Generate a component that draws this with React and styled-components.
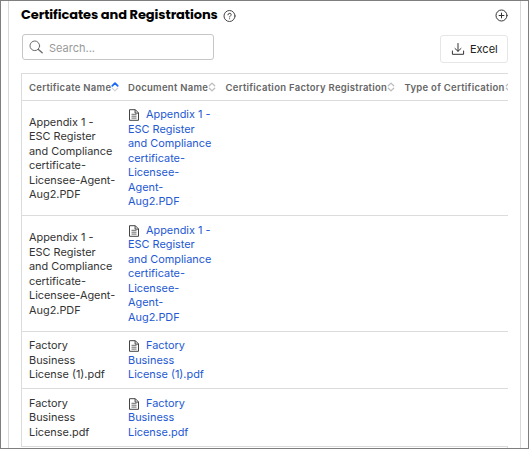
import React from "react";
import styled, { createGlobalStyle } from "styled-components";

const Global = createGlobalStyle`
  * { box-sizing: border-box; }
  html, body { margin: 0; height: 100%; overflow: hidden; background: #fff; }
  body { font-family: Inter, "Liberation Sans", sans-serif; }
`;

const Frame = styled.div`
  width: 529px;
  height: 449px;
  border: 1px solid #7f7f7f;
  padding: 0 7px;
  overflow: hidden;
`;

const Panel = styled.section`
  height: 100%;
  border: solid #d9d9d9;
  border-width: 0 1px;
  padding: 0 12px;
`;

const TitleBar = styled.header`
  height: 33px;
  display: flex;
  align-items: center;
  padding: 0 0 5px 0;
`;

const Title = styled.h1`
  margin: 0 5px 0 0;
  font: 700 13px/18px Poppins, Inter, sans-serif;
  letter-spacing: -0.1px;
  color: #000;
  white-space: nowrap;
`;

const Spacer = styled.div`
  flex: 1;
`;

const Toolbar = styled.div`
  height: 39px;
  display: flex;
  justify-content: space-between;
  align-items: flex-start;
`;

const Search = styled.label`
  width: 192px;
  height: 26px;
  margin-left: 1px;
  padding-left: 6px;
  display: flex;
  align-items: center;
  gap: 6px;
  border: 1px solid #c6c6c6;
  border-radius: 3px;
  color: #6b6b6b;
`;

const SearchInput = styled.input`
  width: 150px;
  border: 0;
  padding: 1px 0 0;
  outline: 0;
  background: none;
  font: 400 11px/16px Inter, sans-serif;
  letter-spacing: 0;
  &::placeholder { color: #999; opacity: 1; }
`;

const ExportButton = styled.button`
  width: 68px;
  height: 28px;
  margin-top: 1px;
  padding: 0 0 0 10px;
  display: flex;
  align-items: center;
  gap: 5px;
  background: #fff;
  border: 1px solid #e6e6e6;
  border-radius: 3px;
  color: #222;
  font: 400 11px/16px Inter, sans-serif;
`;

const TableClip = styled.div`
  overflow: hidden;
  height: 376px;
`;

const Grid = styled.div`
  width: 620px;
  border: solid #dcdcdc;
  border-width: 1px 0 0 1px;
`;

const Row = styled.div`
  display: grid;
  grid-template-columns: 99px 97.5px 179px 1fr;
  align-items: center;
  height: ${(p) => p.$height}px;
  padding-left: 7px;
  border-bottom: 1px solid #dcdcdc;
`;

const HeadCell = styled.div`
  display: flex;
  align-items: center;
  white-space: nowrap;
  color: #666;
  font-size: 9.5px;
  font-weight: 600;
  letter-spacing: 0.28px;
`;

const Cell = styled.div`
  width: ${(p) => p.$width}px;
  color: #333;
  font-size: 10.9px;
  line-height: 14.5px;
`;

const FileLink = styled.a`
  color: #2459d3;
`;

const DocIcon = styled.svg`
  width: 12px;
  height: 12px;
  margin-right: 6px;
  vertical-align: -3px;
  color: #444;
`;

const Stub = styled.div`
  width: 487px;
  height: 20px;
  border-right: 1px solid #dcdcdc;
`;

const Line = styled.svg`
  flex: none;
  fill: none;
  stroke: currentColor;
  stroke-linecap: round;
  stroke-linejoin: round;
`;

const Sort = ({ up }) => (
  <Line width="8" height="10" viewBox="0 0 8 10" strokeWidth="1.3">
    <path d="M1.3 3.8 4 1.1 6.7 3.8" stroke={up ? "#1769f5" : "#bdbdbd"} strokeWidth={up ? 1.8 : 1.3} />
    <path d="M1.3 6.2 4 8.9 6.7 6.2" stroke={up ? "#d6d6d6" : "#bdbdbd"} />
  </Line>
);

const Help = () => (
  <Line width="13" height="13" viewBox="0 0 13 13" color="#444">
    <circle cx="6.5" cy="7" r="5.5" />
    <path d="M4.9 5.8c0-2.1 3.3-2 3.3-.2 0 1.3-1.6 1.3-1.6 2.4M6.6 9.7v.1" />
  </Line>
);

const Add = () => (
  <Line width="13" height="13" viewBox="0 0 13 13" color="#333">
    <circle cx="6.5" cy="6.5" r="5.5" />
    <path d="M4.1 6.5h4.8M6.5 4.1v4.8" />
  </Line>
);

const Magnifier = () => (
  <Line width="14" height="14" viewBox="0 0 14 14">
    <circle cx="5.8" cy="5.8" r="4.8" />
    <path d="m9.4 9.4 3.8 3.4" strokeWidth="1.3" />
  </Line>
);

const Download = () => (
  <Line width="14" height="14" viewBox="0 0 14 14" color="#333">
    <path d="M7 1.5v7.7M4 6.5l3 2.8 3-2.8M1.4 9v3.3h11.2V9" />
  </Line>
);

const Doc = () => (
  <DocIcon viewBox="0 0 12 12" fill="none" stroke="currentColor" strokeWidth="1">
    <path d="M1.5.7h5.8l3.2 3.2v7.4h-9zM7.1.7v3.4h3.4" />
    <path d="M3.5 5.3h5M3.5 7.2h5M3.5 9.1h5" strokeWidth="0.8" />
  </DocIcon>
);

const columns = ["Certificate Name", "Document Name", "Certification Factory Registration", "Type of Certification"];

const appendix = "Appendix 1 - ESC Register and Compliance certificate-Licensee-Agent-Aug2.PDF";

const files = [
  { name: appendix, height: 115 },
  { name: appendix, height: 116 },
  { name: "Factory Business License (1).pdf", height: 57 },
  { name: "Factory Business License.pdf", height: 58 },
];

export default function App() {
  return (
    <Frame>
      <Global />
      <Panel>
        <TitleBar>
          <Title>Certificates and Registrations</Title>
          <Help />
          <Spacer />
          <Add />
        </TitleBar>
        <Toolbar>
          <Search>
            <Magnifier />
            <SearchInput placeholder="Search..." />
          </Search>
          <ExportButton>
            <Download />
            Excel
          </ExportButton>
        </Toolbar>
        <TableClip>
          <Grid>
            <Row $height={27}>
              {columns.map((name, i) => (
                <HeadCell key={name}>
                  {name}
                  <Sort up={i === 0} />
                </HeadCell>
              ))}
            </Row>
            {files.map((file, i) => (
              <Row key={i} $height={file.height}>
                <Cell $width={87}>{file.name}</Cell>
                <Cell $width={86}>
                  <Doc />
                  <FileLink>{file.name}</FileLink>
                </Cell>
              </Row>
            ))}
          </Grid>
          <Stub />
        </TableClip>
      </Panel>
    </Frame>
  );
}
